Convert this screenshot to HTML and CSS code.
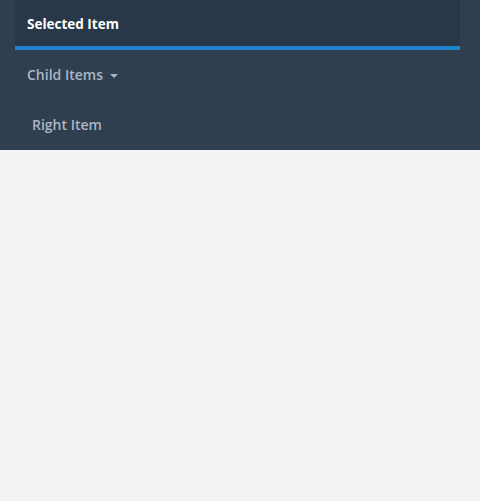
FILE: index.html
```html
<!DOCTYPE html>
<html>
<head>
<meta charset="utf-8">
<link rel="stylesheet" href="styles.css">
</head>
<body>
<nav class="navbar">
  <ul class="nav">
    <li class="item selected">Selected Item</li>
    <li class="item">Child Items <span class="caret"></span></li>
    <li class="item right">Right Item</li>
  </ul>
</nav>
</body>
</html>
```

FILE: styles.css
```css
html, body {
  margin: 0;
  padding: 0;
  background: #f3f3f3;
  height: 100%;
}
body {
  font-family: "Open Sans", "Liberation Sans", sans-serif;
  font-size: 14px;
}
.navbar {
  background: #2f3f50;
  padding: 0 20px 0 15px;
}
.nav {
  list-style: none;
  margin: 0;
  padding: 0;
  display: flex;
  flex-direction: column;
}
.item {
  height: 50px;
  display: flex;
  align-items: center;
  padding-left: 12px;
  padding-bottom: 1px;
  color: #aab6c6;
  font-weight: 600;
  box-sizing: border-box;
}
.item.selected {
  background: #283848;
  color: #ffffff;
  font-weight: 700;
  font-size: 13.5px;
  border-bottom: 4px solid #1f84cb;
  padding-top: 1px;
  padding-bottom: 0;
}
.item.right {
  padding-left: 17px;
}
.caret {
  display: inline-block;
  width: 0;
  height: 0;
  margin-left: 7px;
  margin-top: 2px;
  border-left: 4px solid transparent;
  border-right: 4px solid transparent;
  border-top: 4px solid #aab6c6;
}
```
